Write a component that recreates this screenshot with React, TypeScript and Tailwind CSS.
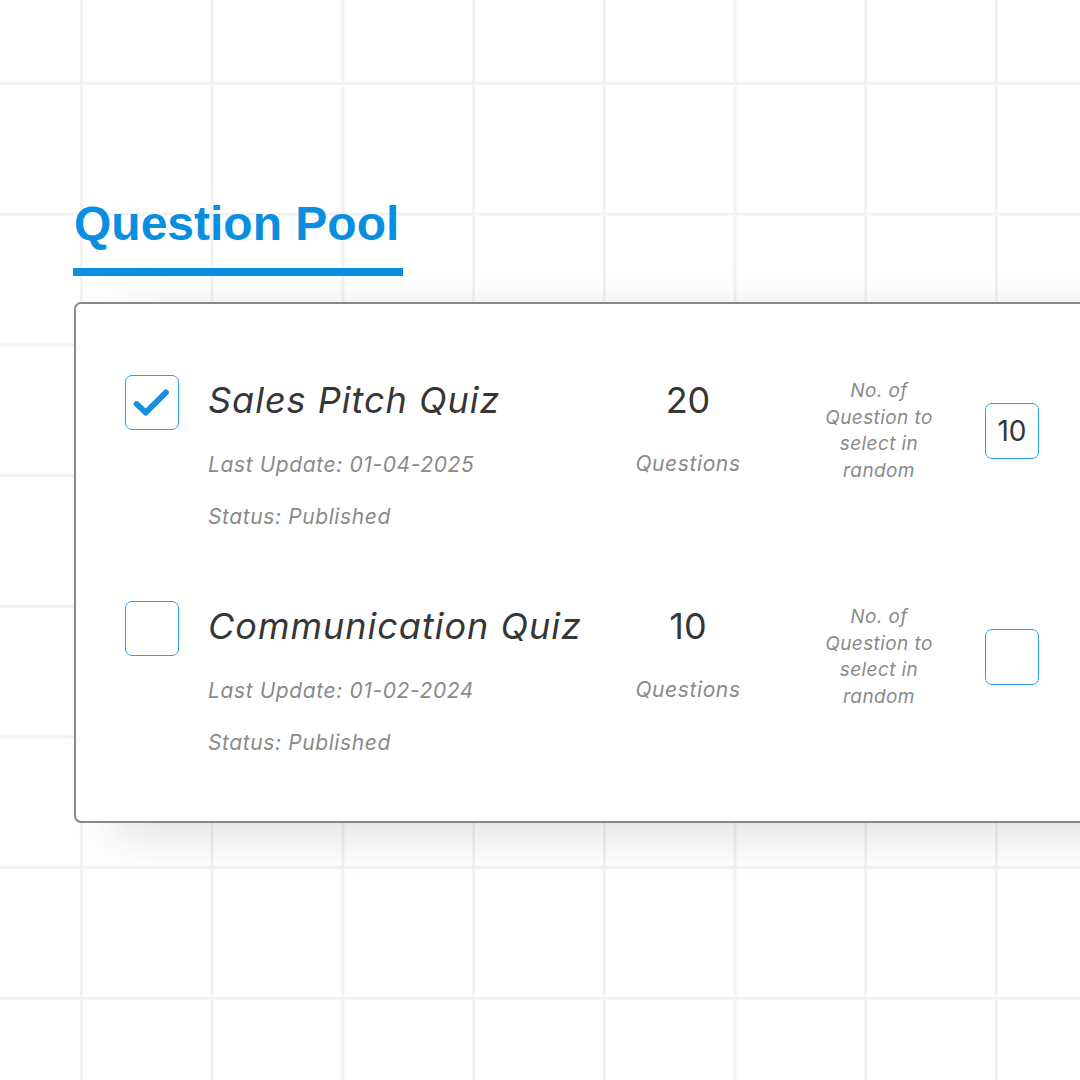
import React from "react";

type Quiz = {
    title: string;
    updated: string;
    count: string;
    picked: string;
    checked: boolean;
};

const quizzes: Quiz[] = [
    { title: "Sales Pitch Quiz", updated: "01-04-2025", count: "20", picked: "10", checked: true },
    { title: "Communication Quiz", updated: "01-02-2024", count: "10", picked: "", checked: false },
];

function CheckBox({ checked }: { checked: boolean }) {
    return (
        <div className="w-[54px] h-[55px] shrink-0 rounded-[7px] border border-[#2d9ce6] bg-white flex items-center justify-center">
            {checked && (
                <svg width="54" height="55" viewBox="0 0 54 55" fill="none">
                    <path
                        d="M11 29 L20.5 38 L41.5 17"
                        stroke="#1590e0"
                        strokeWidth="6"
                        strokeLinecap="round"
                        strokeLinejoin="round"
                    />
                </svg>
            )}
        </div>
    );
}

function QuizRow({ quiz }: { quiz: Quiz }) {
    return (
        <div className="flex items-start">
            <CheckBox checked={quiz.checked} />

            <div className="w-[410px] ml-[29px] shrink-0">
                <div className="mt-[7px] h-[36px] leading-[36px] text-[36px] tracking-[1px] italic text-[#363636] whitespace-nowrap">
                    {quiz.title}
                </div>
                <div className="mt-[35px] leading-[24px] text-[21px] tracking-[0.6px] italic text-[#8a8a8a]">
                    Last Update: {quiz.updated}
                </div>
                <div className="mt-[28px] leading-[24px] text-[21px] tracking-[0.6px] italic text-[#8a8a8a]">
                    Status: Published
                </div>
            </div>

            <div className="w-[140px] shrink-0 flex flex-col items-center">
                <div className="mt-[7px] h-[36px] leading-[36px] text-[36px] text-[#363636]">{quiz.count}</div>
                <div className="mt-[34px] leading-[24px] text-[21px] tracking-[0.6px] italic text-[#8a8a8a]">
                    Questions
                </div>
            </div>

            <div className="w-[140px] ml-[51px] shrink-0 mt-[3px] flex flex-col items-center text-[19px] tracking-[0.4px] leading-[26.5px] italic text-[#8a8a8a]">
                <span>No. of</span>
                <span>Question to</span>
                <span>select in</span>
                <span>random</span>
            </div>

            <div className="ml-[36px] mt-[28px] w-[54px] h-[56px] shrink-0 rounded-[7px] border border-[#2d9ce6] bg-white flex items-center justify-center text-[28px] text-[#363636]">
                {quiz.picked}
            </div>
        </div>
    );
}

export default function App() {
    return (
        <div className="w-[1080px] h-[1080px] overflow-hidden bg-white bg-[linear-gradient(to_right,#f2f2f2_3px,transparent_3px),linear-gradient(to_bottom,#f2f2f2_3px,transparent_3px)] bg-size-[130.7px_130.7px] bg-position-[80px_82px] font-['Inter','Noto_Sans',sans-serif]">
            <div className="pl-[73px] pt-[196px]">
                <h1 className="pl-[1px] text-[48px] leading-[56px] font-bold text-[#0a8fe0] font-['Liberation_Sans',Arial,sans-serif]">
                    Question Pool
                </h1>
                <div className="mt-[16px] w-[330px] h-[8px] bg-[#0a8fe0]" />

                <div className="mt-[26px] ml-[1px] w-[1100px] h-[521px] rounded-[7px] border-2 border-[#888888] bg-white shadow-[40px_12px_50px_rgba(0,0,0,0.13)] pl-[49px] pt-[71px] flex flex-col gap-[72px]">
                    {quizzes.map((q) => (
                        <QuizRow key={q.title} quiz={q} />
                    ))}
                </div>
            </div>
        </div>
    );
}
